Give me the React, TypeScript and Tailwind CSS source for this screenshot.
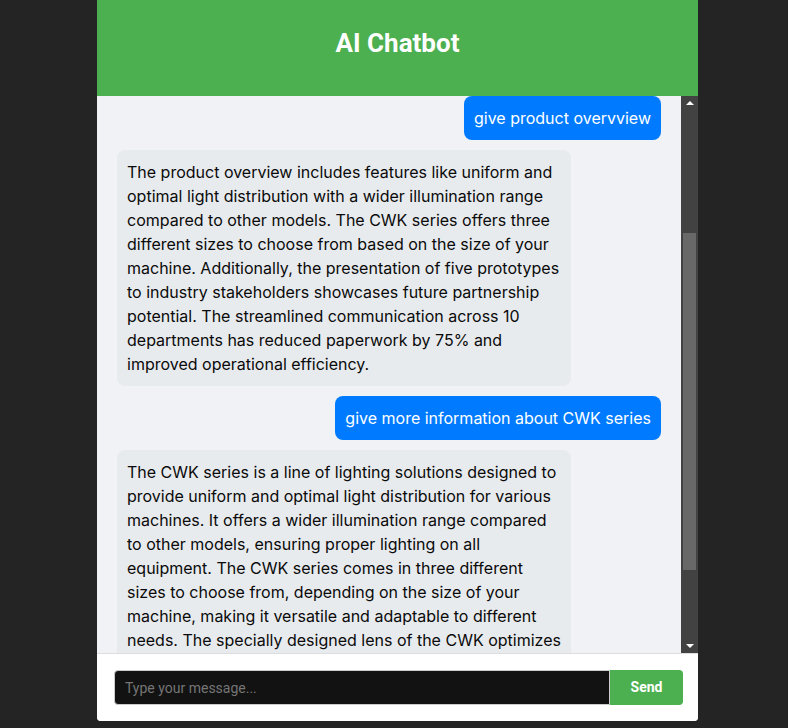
import { useEffect, useRef } from "react";

type Message = { role: "user" | "bot"; text: string };

const earlier: Message[] = [
  { role: "user", text: "hello" },
  {
    role: "bot",
    text: "Hello! I am your AI assistant. I can answer questions about our products, lighting solutions and company updates. How can I help you today?",
  },
];

const visible: Message[] = [
  { role: "user", text: "give product overvview" },
  {
    role: "bot",
    text: "The product overview includes features like uniform and optimal light distribution with a wider illumination range compared to other models. The CWK series offers three different sizes to choose from based on the size of your machine. Additionally, the presentation of five prototypes to industry stakeholders showcases future partnership potential. The streamlined communication across 10 departments has reduced paperwork by 75% and improved operational efficiency.",
  },
  { role: "user", text: "give more information about CWK series" },
  {
    role: "bot",
    text: "The CWK series is a line of lighting solutions designed to provide uniform and optimal light distribution for various machines. It offers a wider illumination range compared to other models, ensuring proper lighting on all equipment. The CWK series comes in three different sizes to choose from, depending on the size of your machine, making it versatile and adaptable to different needs. The specially designed lens of the CWK optimizes light output, reducing glare and shadows in the work area. Overall, the CWK series is a reliable choice for bright and even illumination.",
  },
];

function Bubble({ msg, innerRef }: { msg: Message; innerRef?: React.Ref<HTMLDivElement> }) {
  if (msg.role === "user") {
    return (
      <div ref={innerRef} className="self-end max-w-[454px] rounded-lg bg-[#007bff] px-[10px] py-[10px] text-[16px] leading-6 text-white">
        {msg.text}
      </div>
    );
  }
  return (
    <div ref={innerRef} className="self-start max-w-[454px] rounded-lg bg-[#e8ebee] px-[10px] py-[10px] text-[16px] leading-6 text-[#0a0a0a]">
      {msg.text}
    </div>
  );
}

// dark classic scrollbar, drawn as a column next to the messages
function ScrollBar() {
  return (
    <div className="flex w-[17px] shrink-0 flex-col bg-[#424242]">
      <div className="flex h-[12px] items-center justify-center">
        <svg width="8" height="5" viewBox="0 0 8 5">
          <path d="M0 5 L4 1 L8 5 Z" fill="#fff" />
        </svg>
      </div>
      <div className="flex flex-1 flex-col px-[2px]">
        <div className="h-[125px]" />
        <div className="h-[337px] bg-[#686868]" />
      </div>
      <div className="flex h-[13px] items-center justify-center">
        <svg width="8" height="5" viewBox="0 0 8 5">
          <path d="M0 0 L4 4 L8 0 Z" fill="#fff" />
        </svg>
      </div>
    </div>
  );
}

export default function App() {
  const chatRef = useRef<HTMLDivElement>(null);
  const firstRef = useRef<HTMLDivElement>(null);

  useEffect(() => {
    if (chatRef.current && firstRef.current) {
      chatRef.current.scrollTop = firstRef.current.offsetTop;
    }
  }, []);

  return (
    <div className="min-h-[728px] bg-[#242424] font-['Inter',sans-serif]">
      <div className="ml-[97px] flex h-[721px] w-[601px] flex-col overflow-hidden rounded-b-[4px] bg-white">
        {/* Header */}
        <div className="flex h-[96px] shrink-0 items-center justify-center bg-[#4caf50] pb-[10px]">
          <h1 className="font-['Roboto',sans-serif] text-[26px] font-bold text-white">AI Chatbot</h1>
        </div>

        {/* Messages */}
        <div className="flex min-h-0 flex-1 bg-[#f0f2f5]">
          <div ref={chatRef} className="relative flex flex-1 flex-col gap-[10px] overflow-hidden p-5">
            {earlier.map((m, i) => (
              <Bubble key={`e${i}`} msg={m} />
            ))}
            {visible.map((m, i) => (
              <Bubble key={`v${i}`} msg={m} innerRef={i === 0 ? firstRef : undefined} />
            ))}
          </div>
          <ScrollBar />
        </div>

        {/* Input */}
        <div className="flex shrink-0 border-t border-[#ddd] bg-white pt-4 pb-4 pl-[17px] pr-[15px]">
          <input
            type="text"
            placeholder="Type your message..."
            className="h-[35px] flex-1 rounded-l-[4px] border border-[#ccc] bg-[#121212] px-[10px] font-['Roboto',sans-serif] text-[14px] text-white outline-none placeholder:text-[#757575]"
          />
          <button className="h-[35px] w-[73px] rounded-r-[4px] bg-[#4caf50] font-['Roboto',sans-serif] text-[14px] font-bold text-white">
            Send
          </button>
        </div>
      </div>
    </div>
  );
}
